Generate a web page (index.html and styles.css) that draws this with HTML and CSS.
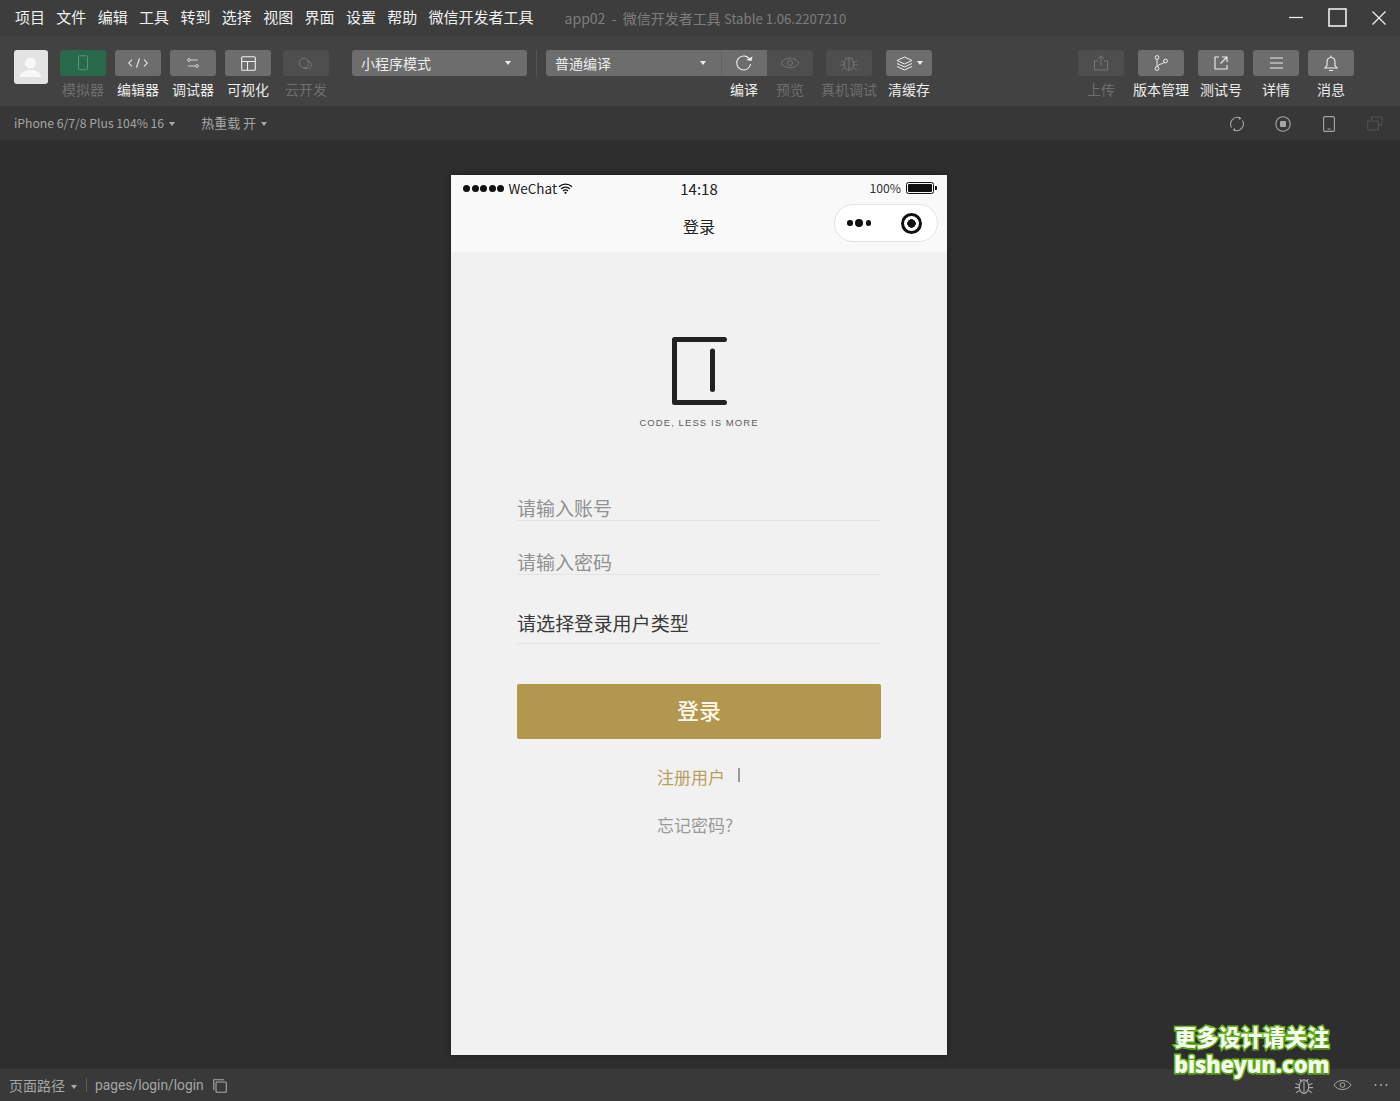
FILE: index.html
```html
<!DOCTYPE html>
<html lang="zh-CN">
<head>
<meta charset="utf-8">
<title>app02 - 微信开发者工具</title>
<link rel="stylesheet" href="styles.css">
</head>
<body>
<div class="app">
  <header class="titlebar">
    <nav class="menu">
      <span>项目</span><span>文件</span><span>编辑</span><span>工具</span><span>转到</span><span>选择</span><span>视图</span><span>界面</span><span>设置</span><span>帮助</span><span>微信开发者工具</span>
    </nav>
    <div class="app-title">app02 &nbsp;-&nbsp; 微信开发者工具 <span class="ver">Stable 1.06.2207210</span></div>
    <div class="win-controls">
      <svg width="14" height="18" viewBox="0 0 14 18"><path d="M0 8.5h14" stroke="#e8e8e8" stroke-width="1.3"/></svg>
      <svg width="19" height="19" viewBox="0 0 19 19"><rect x="1" y="1" width="17" height="17" fill="none" stroke="#eee" stroke-width="1.6"/></svg>
      <svg width="14" height="14" viewBox="0 0 14 14"><path d="M.5.5l13 13M13.5.5l-13 13" stroke="#eee" stroke-width="1.3"/></svg>
    </div>
  </header>

  <section class="toolbar">
    <div class="avatar">
      <svg width="34" height="34" viewBox="0 0 34 34"><circle cx="16.5" cy="13" r="5.5" fill="#f8f8f8"/><path d="M6 27c0-5 5-6 8-7h5c3 1 8 2 8 7z" fill="#f8f8f8"/></svg>
    </div>
    <div class="tool dim first">
      <div class="btn green"><svg width="12" height="16" viewBox="0 0 12 16"><rect x="1.5" y=".8" width="9" height="14" rx="1" fill="none" stroke="#5d9078" stroke-width="1"/></svg></div>
      <span>模拟器</span>
    </div>
    <div class="tool">
      <div class="btn"><svg width="20" height="10" viewBox="0 0 20 10"><path d="M4 1.500L.8 5 4 8.500M16 1.500L19.200 5 16 8.500M11.500 .5L8.500 9.500" fill="none" stroke="#eee" stroke-width="1.100"/></svg></div>
      <span>编辑器</span>
    </div>
    <div class="tool">
      <div class="btn"><svg width="12" height="10" viewBox="0 0 12 10"><circle cx="2" cy="2" r="1.400" fill="none" stroke="#ddd" stroke-width=".9"/><circle cx="10" cy="8" r="1.400" fill="none" stroke="#ddd" stroke-width=".9"/><path d="M3.500 2H11M1 8h7.500" stroke="#ddd" stroke-width=".9"/></svg></div>
      <span>调试器</span>
    </div>
    <div class="tool">
      <div class="btn"><svg width="15" height="15" viewBox="0 0 15 15"><rect x=".7" y=".7" width="13.600" height="13.600" rx="1" fill="none" stroke="#eee" stroke-width="1.100"/><path d="M.7 5.500h13.600M6.500 5.500v8.800" stroke="#eee" stroke-width="1.100"/></svg></div>
      <span>可视化</span>
    </div>
    <div class="tool dim gap-s">
      <div class="btn off"><svg width="17" height="12" viewBox="0 0 17 12"><circle cx="6" cy="6" r="4.800" fill="none" stroke="#747474"/><path d="M9 4a3.800 3.800 0 1 1 0 7.500H5" fill="none" stroke="#747474"/></svg></div>
      <span>云开发</span>
    </div>

    <div class="select mode"><span>小程序模式</span><i class="caret light"></i></div>
    <div class="vline"></div>

    <div class="select compile"><span>普通编译</span><i class="caret light"></i></div>
    <div class="tool joined-tool">
      <div class="btn joined"><svg class="refresh" width="18" height="17" viewBox="0 0 18 17"><path d="M14.600 4.200A7 7 0 1 0 15.600 9" fill="none" stroke="#eee" stroke-width="1.100"/><path d="M11.500 5.500h5.400V.8z" fill="#eee" transform="rotate(12 14 4)"/></svg></div>
      <span>编译</span>
    </div>
    <div class="tool dim joined-tool">
      <div class="btn off joined-end"><svg width="20" height="12" viewBox="0 0 20 12"><path d="M1 6c4-6.400 14-6.400 18 0-4 6.400-14 6.400-18 0z" fill="none" stroke="#747474"/><circle cx="10" cy="6" r="2.500" fill="none" stroke="#747474"/></svg></div>
      <span>预览</span>
    </div>
    <div class="tool dim gap-m">
      <div class="btn off"><svg width="18" height="18" viewBox="0 0 18 18"><ellipse cx="9" cy="10" rx="4.500" ry="6.500" fill="none" stroke="#747474"/><path d="M9 4v12M5 3.500l2 2M13 3.500l-2 2M1 7l3.500 1.500M17 7l-3.500 1.500M.5 11h4M17.500 11h-4M1.500 16l3.500-2.500M16.500 16L13 13.500" stroke="#747474" fill="none"/></svg></div>
      <span>真机调试</span>
    </div>
    <div class="tool gap-l">
      <div class="btn"><svg width="17" height="15" viewBox="0 0 17 15"><path d="M8.500 1L16 4.500 8.500 8 1 4.500z" fill="none" stroke="#eee"/><path d="M1 7.500L8.500 11 16 7.500M1 10.500L8.500 14 16 10.500" fill="none" stroke="#eee"/></svg><i class="caret light small-gap"></i></div>
      <span>清缓存</span>
    </div>

    <div class="tool dim right-start">
      <div class="btn off"><svg width="16" height="16" viewBox="0 0 16 16"><path d="M5 6H1.500v9h13V6H11M8 11V1M5 3.800L8 1l3 2.800" fill="none" stroke="#767676"/></svg></div>
      <span>上传</span>
    </div>
    <div class="tool gap-l">
      <div class="btn"><svg width="14" height="16" viewBox="0 0 14 16"><circle cx="3" cy="2.500" r="1.900" fill="none" stroke="#eee"/><circle cx="3" cy="13.500" r="1.900" fill="none" stroke="#eee"/><circle cx="11.500" cy="6" r="1.900" fill="none" stroke="#eee"/><path d="M3 4.500v7M3.600 11.500c1-3 5-2 6.600-4.200" fill="none" stroke="#eee"/></svg></div>
      <span>版本管理</span>
    </div>
    <div class="tool gap-l">
      <div class="btn"><svg width="14" height="14" viewBox="0 0 14 14"><path d="M5 1H1v12h12V9M8 1h5v5M13 1L6.500 7.500" fill="none" stroke="#eee" stroke-width="1.100"/></svg></div>
      <span>测试号</span>
    </div>
    <div class="tool">
      <div class="btn"><svg width="13" height="12" viewBox="0 0 13 12"><path d="M0 1h13M0 6h13M0 11h13" stroke="#eee" stroke-width="1.100"/></svg></div>
      <span>详情</span>
    </div>
    <div class="tool">
      <div class="btn"><svg width="14" height="17" viewBox="0 0 14 17"><path d="M7 2.500c-3 0-4 2-4 4.500v3.500L1 13h12l-2-2.500V7c0-2.500-1-4.500-4-4.500zM7 .5v2M5 15.500h4" fill="none" stroke="#eee" stroke-width="1.100"/></svg></div>
      <span>消息</span>
    </div>
  </section>

  <section class="subbar">
    <span class="sub-device">iPhone 6/7/8 Plus 104% 16<i class="caret"></i></span>
    <span class="sub-reload">热重载 开<i class="caret"></i></span>
    <div class="sub-icons">
      <svg width="16" height="16" viewBox="0 0 16 16"><path d="M2.500 11.500A6.800 6.800 0 0 1 11 1.900M13.500 4.500A6.800 6.800 0 0 1 5 14.100" fill="none" stroke="#a5a5a5" stroke-width="1.100"/><path d="M9.800.4l2.600 1.800-2.400 1.700zM6.200 15.600l-2.600-1.800 2.400-1.700z" fill="#a5a5a5"/></svg>
      <svg width="16" height="16" viewBox="0 0 16 16"><circle cx="8" cy="8" r="7.200" fill="none" stroke="#a5a5a5" stroke-width="1.100"/><rect x="5" y="5" width="6" height="6" rx="1" fill="#a5a5a5"/></svg>
      <svg width="12" height="16" viewBox="0 0 12 16"><rect x=".6" y=".6" width="10.800" height="14.800" rx="1.200" fill="none" stroke="#a5a5a5" stroke-width="1.100"/><path d="M4.500 13h3" stroke="#a5a5a5"/></svg>
      <svg width="16" height="15" viewBox="0 0 16 15"><path d="M4.500 4V1H15v8h-3M.8 5h10.500v9H.8z" fill="none" stroke="#555" stroke-width="1"/></svg>
    </div>
  </section>

  <main class="stage">
    <div class="phone">
      <div class="phone-head">
        <div class="statusbar">
          <div class="st-left">
            <span class="sig"><i></i><i></i><i></i><i></i><i></i></span>
            <span class="carrier">WeChat</span>
            <svg width="15" height="11" viewBox="0 0 15 11"><path d="M1 3.800a9.300 9.300 0 0 1 13 0M3 5.900a6.400 6.400 0 0 1 9 0M5 8a3.500 3.500 0 0 1 5 0" fill="none" stroke="#111" stroke-width="1.300"/><circle cx="7.500" cy="9.800" r="1.100" fill="#111"/></svg>
          </div>
          <div class="st-time">14:18</div>
          <div class="st-right">
            <span class="pct">100%</span>
            <span class="battery"><b></b></span>
            <span class="nub"></span>
          </div>
        </div>
        <div class="navbar">
          <span class="nav-title">登录</span>
          <div class="capsule">
            <span class="cap-dots"><i></i><i class="big"></i><i></i></span>
            <span class="cap-target"></span>
          </div>
        </div>
      </div>
      <div class="phone-body">
        <svg class="logo" width="58" height="70" viewBox="0 0 58 70"><path d="M53.500 2.500H3.500V65.500H53.500" fill="none" stroke="#222" stroke-width="5" stroke-linecap="round" stroke-linejoin="round"/><path d="M41.500 14v38.500" stroke="#222" stroke-width="5" stroke-linecap="round"/></svg>
        <div class="slogan">CODE, LESS IS MORE</div>
        <form class="form">
          <div class="field first-field"><span class="ph">请输入账号</span></div>
          <div class="field"><span class="ph">请输入密码</span></div>
          <div class="field type-field"><span class="val">请选择登录用户类型</span></div>
          <div class="submit">登录</div>
          <div class="links">
            <span class="reg">注册用户</span><span class="sep"></span>
          </div>
          <div class="forgot">忘记密码?</div>
        </form>
      </div>
    </div>
  </main>

  <footer class="status">
    <span class="path-label">页面路径<i class="caret"></i></span>
    <span class="path-sep"></span>
    <span class="path">pages/login/login</span>
    <svg class="copy" width="14" height="14" viewBox="0 0 14 14"><path d="M.8 11V.8H11" fill="none" stroke="#aaa" stroke-width="1.100"/><rect x="3" y="3" width="10.300" height="10.300" rx="1" fill="none" stroke="#aaa" stroke-width="1.100"/></svg>
    <div class="status-right">
      <svg width="20" height="19" viewBox="0 0 18 18"><ellipse cx="9" cy="10" rx="4.500" ry="6.500" fill="none" stroke="#aaa"/><path d="M9 4v12M5 3l2 2.500M13 3l-2 2.500M1 7l3.500 1.500M17 7l-3.500 1.500M.5 11h4M17.500 11h-4M1.500 16l3.500-2.500M16.500 16L13 13.500" stroke="#aaa" fill="none"/></svg>
      <svg width="19" height="12" viewBox="0 0 20 12"><path d="M1 6c4-6.400 14-6.400 18 0-4 6.400-14 6.400-18 0z" fill="none" stroke="#aaa"/><circle cx="10" cy="6" r="2.500" fill="none" stroke="#aaa"/></svg>
      <svg class="more" width="14" height="4" viewBox="0 0 14 4"><circle cx="1.500" cy="2" r="1" fill="#aaa"/><circle cx="7" cy="2" r="1" fill="#aaa"/><circle cx="12.500" cy="2" r="1" fill="#aaa"/></svg>
    </div>
  </footer>

  <div class="watermark">
    <div class="wm-cn">更多设计请关注</div>
    <div class="wm-en">bisheyun.com</div>
  </div>
</div>
</body>
</html>
```

FILE: styles.css
```css
* { box-sizing: border-box; }
html, body { margin: 0; padding: 0; height: 100%; }
body {
  background: #2e2e2e;
  font-family: "Noto Sans CJK SC", "Noto Sans", sans-serif;
  color: #ddd;
  overflow: hidden;
}
.app { position: relative; width: 1400px; height: 1101px; display: flex; flex-direction: column; }

/* title bar */
.titlebar { height: 36px; flex: none; display: flex; align-items: center; background: #3d3d3d; padding-left: 15px; }
.menu { display: flex; gap: 11.35px; font-size: 15px; line-height: 36px; color: #f0f0f0; padding-bottom: 2px; }
.app-title { margin-left: 31px; font-size: 14px; color: #7d7d7d; white-space: nowrap; padding-bottom: 1px; }
.ver { font-size: 13.2px; }
.win-controls { margin-left: auto; display: flex; align-items: center; padding: 0 14px 1px 0; gap: 25px; }

/* tool bar */
.toolbar { height: 70px; flex: none; display: flex; align-items: flex-start; padding: 14px 0 0 14px; background: #424242; }
.avatar { width: 34px; height: 34px; border-radius: 3px; background: #e3e3e3; flex: none; }
.avatar svg { display: block; }
.tool { width: 46px; flex: none; display: flex; flex-direction: column; align-items: center; margin-left: 9px; }
.tool.first { margin-left: 12px; }
.tool.gap-s { margin-left: 12px; }
.tool.gap-m { margin-left: 13px; }
.tool.gap-l { margin-left: 14px; }
.tool.joined-tool { margin-left: 0; }
.tool.right-start { margin-left: 146px; }
.tool > span { font-size: 14px; line-height: 20px; margin-top: 3px; white-space: nowrap; color: #ececec; }
.tool.dim > span { color: #6e6e6e; }
.btn { width: 46px; height: 26px; border-radius: 3px; background: #6d6d6d; display: flex; align-items: center; justify-content: center; }
.btn.green { background: #28694b; }
.btn.off { background: #4e4e4e; }
.btn.joined { border-radius: 0; border-left: 1px solid #636363; }
.btn.joined-end { border-radius: 0 3px 3px 0; }
.refresh { margin-right: 2px; }
.select { height: 26px; flex: none; background: #6d6d6d; border-radius: 3px; display: flex; align-items: center; justify-content: space-between; font-size: 14px; color: #ececec; padding: 0 16px 0 9px; }
.select.mode { width: 175px; margin-left: 23px; }
.select.compile { width: 175px; border-radius: 3px 0 0 3px; margin-left: 9px; padding-right: 15px; }
.vline { width: 1px; height: 26px; background: #555; margin-left: 9px; flex: none; }
.caret { display: inline-block; width: 0; height: 0; border-left: 3px solid transparent; border-right: 3px solid transparent; border-top: 4px solid #aaa; margin-left: 5px; vertical-align: middle; }
.caret.light { border-top-color: #eee; }
.caret.small-gap { margin-left: 4px; }

/* sub bar */
.subbar { height: 34px; flex: none; display: flex; align-items: center; background: #373737; padding: 0 0 1px 14px; font-size: 12.2px; color: #a5a5a5; }
.sub-reload { margin-left: 26px; font-size: 13px; }
.sub-icons { margin: 2px 0 0 auto; display: grid; grid-template-columns: repeat(4, 46px); justify-items: center; align-items: center; padding-right: 2px; }
.sub-icons svg { display: block; }

/* stage */
.stage { flex: 1; min-height: 0; display: flex; justify-content: center; padding-top: 35px; background: #2e2e2e; }
.phone { width: 496px; height: 880px; display: flex; flex-direction: column; background: #f1f1f1; box-shadow: 0 0 6px rgba(0,0,0,.4); margin-left: -2px; color: #222; }
.phone-head { height: 77px; background: #f9f9f9; flex: none; }
.statusbar { height: 26px; display: flex; align-items: center; position: relative; padding: 0 10px 0 12px; }
.st-left { display: flex; align-items: center; }
.sig { display: flex; gap: 1.6px; }
.sig i { width: 7px; height: 7px; background: #111; border-radius: 50%; display: block; }
.carrier { font-size: 13.5px; margin-left: 4px; margin-right: 1px; color: #222; }
.st-time { position: absolute; left: 0; right: 0; text-align: center; font-size: 15px; color: #222; }
.st-right { margin-left: auto; display: flex; align-items: center; }
.pct { font-size: 12.2px; color: #333; margin-right: 5px; }
.battery { width: 28px; height: 12px; border: 1.3px solid #111; border-radius: 2.5px; padding: 1.3px; display: block; }
.battery b { display: block; width: 100%; height: 100%; background: #111; border-radius: 1px; }
.nub { width: 2px; height: 4px; background: #111; border-radius: 0 1px 1px 0; margin-left: 1px; }
.navbar { height: 51px; position: relative; display: flex; justify-content: center; align-items: center; }
.nav-title { font-size: 16px; color: #222; padding-bottom: 1px; }
.capsule { position: absolute; right: 9px; top: 3px; width: 104px; height: 38px; background: #fff; border: 1px solid #e3e3e3; border-radius: 19px; }
.cap-dots { position: absolute; left: 12px; top: 14px; display: flex; align-items: center; gap: 2.5px; }
.cap-dots i { display: block; width: 5.5px; height: 5.5px; border-radius: 50%; background: #111; }
.cap-dots i.big { width: 8px; height: 8px; }
.cap-target { position: absolute; left: 66px; top: 8px; width: 21px; height: 21px; border-radius: 50%; border: 3px solid #111; background: radial-gradient(circle, #111 0 4px, #fff 4.5px); }

.phone-body { flex: 1; display: flex; flex-direction: column; align-items: center; padding-top: 85px; background: #f1f1f1; }
.logo { display: block; margin-left: 2px; flex: none; }
.slogan { font-family: "Liberation Sans", sans-serif; font-size: 9.5px; letter-spacing: 1.08px; line-height: 12px; margin-top: 10px; color: #5c5c5c; white-space: nowrap; }
.form { width: 364px; display: flex; flex-direction: column; }
.field { height: 54px; display: flex; align-items: flex-end; border-bottom: 1px solid #e3e3e3; font-size: 19px; }
.first-field { height: 92px; }
.ph { color: #909090; line-height: 24px; }
.val { color: #3a3a3a; line-height: 28px; padding-bottom: 6px; font-size: 19.1px; }
.type-field { height: 69px; }
.submit { height: 55px; margin-top: 40px; padding-bottom: 5px; background: #b2974f; border-radius: 2px; color: #fbf6e8; font-size: 22px; font-weight: 500; display: flex; align-items: center; justify-content: center; }
.links { display: flex; align-items: center; height: 24px; margin-top: 26px; padding-left: 140px; font-size: 17px; color: #b8a060; }
.reg { line-height: 24px; }
.sep { width: 1.5px; height: 14px; background: #999; margin-left: 13px; margin-top: -4px; }
.forgot { margin-top: 24px; padding-left: 140px; font-size: 17px; line-height: 24px; color: #999; }

/* status */
.status { height: 32px; flex: none; display: flex; align-items: center; background: #393939; padding-left: 9px; font-size: 14px; color: #a5a5a5; }
.path-label .caret { margin-left: 6px; }
.path-sep { width: 1px; height: 14px; background: #5c5c5c; margin: 0 8px 0 9px; }
.path { font-family: Roboto, sans-serif; font-size: 13.8px; }
.copy { margin-left: 9px; margin-top: 2px; }
.status-right { margin-left: auto; display: flex; align-items: center; gap: 18.5px; padding-right: 12px; }
.status-right .more { margin-left: 4px; }

/* watermark */
.watermark { position: absolute; left: 1174px; top: 1022px; font-weight: 900; color: #f4fff0; paint-order: stroke fill; -webkit-text-stroke: 3px #6cb81e; white-space: nowrap; text-shadow: 0 1px 1px rgba(60,110,10,.6); }
.wm-cn { font-size: 22.2px; line-height: 29px; }
.wm-en { font-size: 22px; line-height: 26px; font-family: "Noto Sans", sans-serif; letter-spacing: -.2px; }
```
